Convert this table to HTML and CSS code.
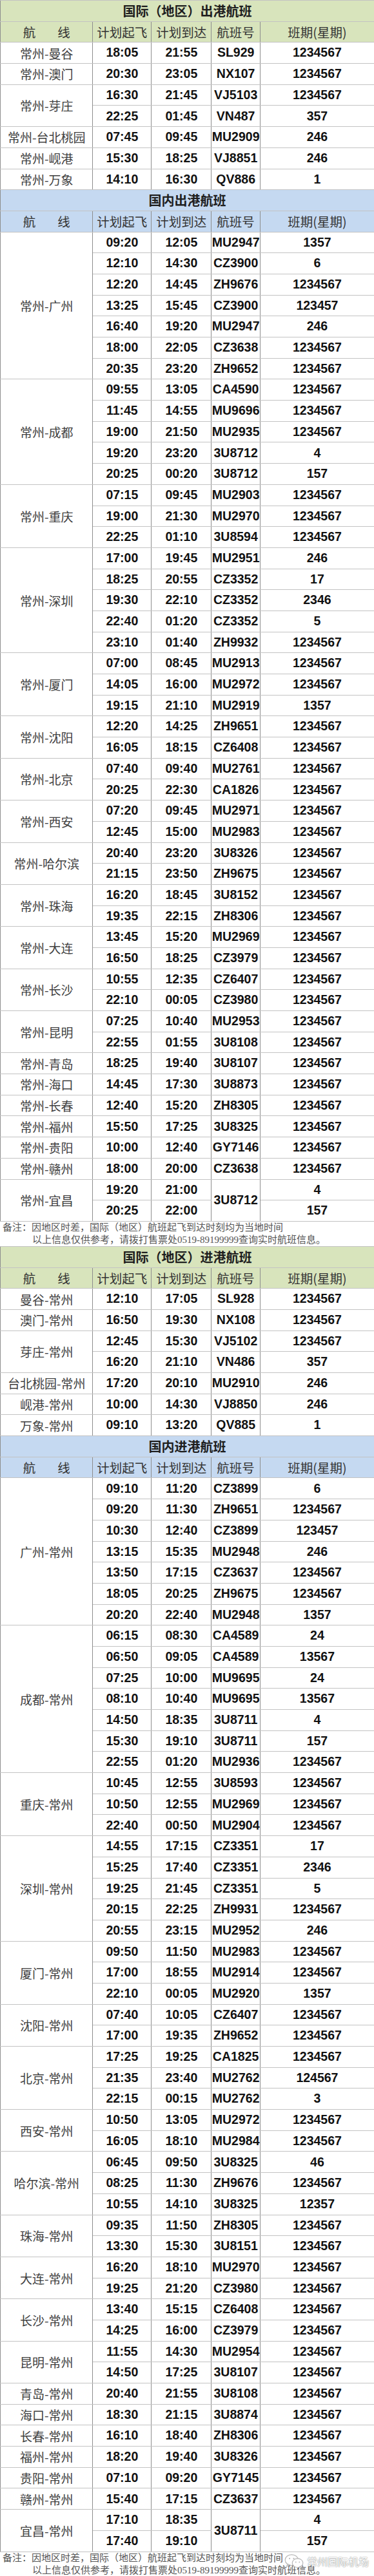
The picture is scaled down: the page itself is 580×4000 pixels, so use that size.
FILE: index.html
```html
<!DOCTYPE html>
<html lang="zh-CN">
<head>
<meta charset="utf-8">
<title>常州国际机场航班时刻表</title>
<link rel="stylesheet" href="styles.css">
</head>
<body>
<div class="page">

<table class="sched">
<colgroup><col class="c1"><col class="c2"><col class="c3"><col class="c4"><col class="c5"></colgroup>
<tr class="title green"><td colspan="5">国际（地区）出港航班</td></tr>
<tr class="head green"><td>航<span class="sp"></span>线</td><td>计划起飞</td><td>计划到达</td><td>航班号</td><td>班期(星期)</td></tr>
<tr><td class="route">常州-曼谷</td><td>18:05</td><td>21:55</td><td>SL929</td><td>1234567</td></tr>
<tr><td class="route">常州-澳门</td><td>20:30</td><td>23:05</td><td>NX107</td><td>1234567</td></tr>
<tr><td class="route" rowspan="2">常州-芽庄</td><td>16:30</td><td>21:45</td><td>VJ5103</td><td>1234567</td></tr>
<tr><td>22:25</td><td>01:45</td><td>VN487</td><td>357</td></tr>
<tr><td class="route">常州-台北桃园</td><td>07:45</td><td>09:45</td><td>MU2909</td><td>246</td></tr>
<tr><td class="route">常州-岘港</td><td>15:30</td><td>18:25</td><td>VJ8851</td><td>246</td></tr>
<tr><td class="route">常州-万象</td><td>14:10</td><td>16:30</td><td>QV886</td><td>1</td></tr>

<tr class="title blue"><td colspan="5">国内出港航班</td></tr>
<tr class="head blue"><td>航<span class="sp"></span>线</td><td>计划起飞</td><td>计划到达</td><td>航班号</td><td>班期(星期)</td></tr>
<tr><td class="route" rowspan="7">常州-广州</td><td>09:20</td><td>12:05</td><td>MU2947</td><td>1357</td></tr>
<tr><td>12:10</td><td>14:30</td><td>CZ3900</td><td>6</td></tr>
<tr><td>12:20</td><td>14:45</td><td>ZH9676</td><td>1234567</td></tr>
<tr><td>13:25</td><td>15:45</td><td>CZ3900</td><td>123457</td></tr>
<tr><td>16:40</td><td>19:20</td><td>MU2947</td><td>246</td></tr>
<tr><td>18:00</td><td>22:05</td><td>CZ3638</td><td>1234567</td></tr>
<tr><td>20:35</td><td>23:20</td><td>ZH9652</td><td>1234567</td></tr>
<tr><td class="route" rowspan="5">常州-成都</td><td>09:55</td><td>13:05</td><td>CA4590</td><td>1234567</td></tr>
<tr><td>11:45</td><td>14:55</td><td>MU9696</td><td>1234567</td></tr>
<tr><td>19:00</td><td>21:50</td><td>MU2935</td><td>1234567</td></tr>
<tr><td>19:20</td><td>23:20</td><td>3U8712</td><td>4</td></tr>
<tr><td>20:25</td><td>00:20</td><td>3U8712</td><td>157</td></tr>
<tr><td class="route" rowspan="3">常州-重庆</td><td>07:15</td><td>09:45</td><td>MU2903</td><td>1234567</td></tr>
<tr><td>19:00</td><td>21:30</td><td>MU2970</td><td>1234567</td></tr>
<tr><td>22:25</td><td>01:10</td><td>3U8594</td><td>1234567</td></tr>
<tr><td class="route" rowspan="5">常州-深圳</td><td>17:00</td><td>19:45</td><td>MU2951</td><td>246</td></tr>
<tr><td>18:25</td><td>20:55</td><td>CZ3352</td><td>17</td></tr>
<tr><td>19:30</td><td>22:10</td><td>CZ3352</td><td>2346</td></tr>
<tr><td>22:40</td><td>01:20</td><td>CZ3352</td><td>5</td></tr>
<tr><td>23:10</td><td>01:40</td><td>ZH9932</td><td>1234567</td></tr>
<tr><td class="route" rowspan="3">常州-厦门</td><td>07:00</td><td>08:45</td><td>MU2913</td><td>1234567</td></tr>
<tr><td>14:05</td><td>16:00</td><td>MU2972</td><td>1234567</td></tr>
<tr><td>19:15</td><td>21:10</td><td>MU2919</td><td>1357</td></tr>
<tr><td class="route" rowspan="2">常州-沈阳</td><td>12:20</td><td>14:25</td><td>ZH9651</td><td>1234567</td></tr>
<tr><td>16:05</td><td>18:15</td><td>CZ6408</td><td>1234567</td></tr>
<tr><td class="route" rowspan="2">常州-北京</td><td>07:40</td><td>09:40</td><td>MU2761</td><td>1234567</td></tr>
<tr><td>20:25</td><td>22:30</td><td>CA1826</td><td>1234567</td></tr>
<tr><td class="route" rowspan="2">常州-西安</td><td>07:20</td><td>09:45</td><td>MU2971</td><td>1234567</td></tr>
<tr><td>12:45</td><td>15:00</td><td>MU2983</td><td>1234567</td></tr>
<tr><td class="route" rowspan="2">常州-哈尔滨</td><td>20:40</td><td>23:20</td><td>3U8326</td><td>1234567</td></tr>
<tr><td>21:15</td><td>23:50</td><td>ZH9675</td><td>1234567</td></tr>
<tr><td class="route" rowspan="2">常州-珠海</td><td>16:20</td><td>18:45</td><td>3U8152</td><td>1234567</td></tr>
<tr><td>19:35</td><td>22:15</td><td>ZH8306</td><td>1234567</td></tr>
<tr><td class="route" rowspan="2">常州-大连</td><td>13:45</td><td>15:20</td><td>MU2969</td><td>1234567</td></tr>
<tr><td>16:50</td><td>18:25</td><td>CZ3979</td><td>1234567</td></tr>
<tr><td class="route" rowspan="2">常州-长沙</td><td>10:55</td><td>12:35</td><td>CZ6407</td><td>1234567</td></tr>
<tr><td>22:10</td><td>00:05</td><td>CZ3980</td><td>1234567</td></tr>
<tr><td class="route" rowspan="2">常州-昆明</td><td>07:25</td><td>10:40</td><td>MU2953</td><td>1234567</td></tr>
<tr><td>22:55</td><td>01:55</td><td>3U8108</td><td>1234567</td></tr>
<tr><td class="route">常州-青岛</td><td>18:25</td><td>19:40</td><td>3U8107</td><td>1234567</td></tr>
<tr><td class="route">常州-海口</td><td>14:45</td><td>17:30</td><td>3U8873</td><td>1234567</td></tr>
<tr><td class="route">常州-长春</td><td>12:40</td><td>15:20</td><td>ZH8305</td><td>1234567</td></tr>
<tr><td class="route">常州-福州</td><td>15:50</td><td>17:25</td><td>3U8325</td><td>1234567</td></tr>
<tr><td class="route">常州-贵阳</td><td>10:00</td><td>12:40</td><td>GY7146</td><td>1234567</td></tr>
<tr><td class="route">常州-赣州</td><td>18:00</td><td>20:00</td><td>CZ3638</td><td>1234567</td></tr>
<tr><td class="route" rowspan="2">常州-宜昌</td><td>19:20</td><td>21:00</td><td rowspan="2">3U8712</td><td>4</td></tr>
<tr><td>20:25</td><td>22:00</td><td>157</td></tr>
</table>

<div class="note">
<p>备注：因地区时差，国际（地区）航班起飞到达时刻均为当地时间</p>
<p class="indent">以上信息仅供参考，请拨打售票处0519-89199999查询实时航班信息。</p>
</div>

<table class="sched">
<colgroup><col class="c1"><col class="c2"><col class="c3"><col class="c4"><col class="c5"></colgroup>
<tr class="title green"><td colspan="5">国际（地区）进港航班</td></tr>
<tr class="head green"><td>航<span class="sp"></span>线</td><td>计划起飞</td><td>计划到达</td><td>航班号</td><td>班期(星期)</td></tr>
<tr><td class="route">曼谷-常州</td><td>12:10</td><td>17:05</td><td>SL928</td><td>1234567</td></tr>
<tr><td class="route">澳门-常州</td><td>16:50</td><td>19:30</td><td>NX108</td><td>1234567</td></tr>
<tr><td class="route" rowspan="2">芽庄-常州</td><td>12:45</td><td>15:30</td><td>VJ5102</td><td>1234567</td></tr>
<tr><td>16:20</td><td>21:10</td><td>VN486</td><td>357</td></tr>
<tr><td class="route">台北桃园-常州</td><td>17:20</td><td>20:10</td><td>MU2910</td><td>246</td></tr>
<tr><td class="route">岘港-常州</td><td>10:00</td><td>14:30</td><td>VJ8850</td><td>246</td></tr>
<tr><td class="route">万象-常州</td><td>09:10</td><td>13:20</td><td>QV885</td><td>1</td></tr>

<tr class="title blue"><td colspan="5">国内进港航班</td></tr>
<tr class="head blue"><td>航<span class="sp"></span>线</td><td>计划起飞</td><td>计划到达</td><td>航班号</td><td>班期(星期)</td></tr>
<tr><td class="route" rowspan="7">广州-常州</td><td>09:10</td><td>11:20</td><td>CZ3899</td><td>6</td></tr>
<tr><td>09:20</td><td>11:30</td><td>ZH9651</td><td>1234567</td></tr>
<tr><td>10:30</td><td>12:40</td><td>CZ3899</td><td>123457</td></tr>
<tr><td>13:15</td><td>15:35</td><td>MU2948</td><td>246</td></tr>
<tr><td>13:50</td><td>17:15</td><td>CZ3637</td><td>1234567</td></tr>
<tr><td>18:05</td><td>20:25</td><td>ZH9675</td><td>1234567</td></tr>
<tr><td>20:20</td><td>22:40</td><td>MU2948</td><td>1357</td></tr>
<tr><td class="route" rowspan="7">成都-常州</td><td>06:15</td><td>08:30</td><td>CA4589</td><td>24</td></tr>
<tr><td>06:50</td><td>09:05</td><td>CA4589</td><td>13567</td></tr>
<tr><td>07:25</td><td>10:00</td><td>MU9695</td><td>24</td></tr>
<tr><td>08:10</td><td>10:40</td><td>MU9695</td><td>13567</td></tr>
<tr><td>14:50</td><td>18:35</td><td>3U8711</td><td>4</td></tr>
<tr><td>15:30</td><td>19:10</td><td>3U8711</td><td>157</td></tr>
<tr><td>22:55</td><td>01:20</td><td>MU2936</td><td>1234567</td></tr>
<tr><td class="route" rowspan="3">重庆-常州</td><td>10:45</td><td>12:55</td><td>3U8593</td><td>1234567</td></tr>
<tr><td>10:50</td><td>12:55</td><td>MU2969</td><td>1234567</td></tr>
<tr><td>22:40</td><td>00:50</td><td>MU2904</td><td>1234567</td></tr>
<tr><td class="route" rowspan="5">深圳-常州</td><td>14:55</td><td>17:15</td><td>CZ3351</td><td>17</td></tr>
<tr><td>15:25</td><td>17:40</td><td>CZ3351</td><td>2346</td></tr>
<tr><td>19:25</td><td>21:45</td><td>CZ3351</td><td>5</td></tr>
<tr><td>20:15</td><td>22:25</td><td>ZH9931</td><td>1234567</td></tr>
<tr><td>20:55</td><td>23:15</td><td>MU2952</td><td>246</td></tr>
<tr><td class="route" rowspan="3">厦门-常州</td><td>09:50</td><td>11:50</td><td>MU2983</td><td>1234567</td></tr>
<tr><td>17:00</td><td>18:55</td><td>MU2914</td><td>1234567</td></tr>
<tr><td>22:10</td><td>00:05</td><td>MU2920</td><td>1357</td></tr>
<tr><td class="route" rowspan="2">沈阳-常州</td><td>07:40</td><td>10:05</td><td>CZ6407</td><td>1234567</td></tr>
<tr><td>17:00</td><td>19:35</td><td>ZH9652</td><td>1234567</td></tr>
<tr><td class="route" rowspan="3">北京-常州</td><td>17:25</td><td>19:25</td><td>CA1825</td><td>1234567</td></tr>
<tr><td>21:35</td><td>23:40</td><td>MU2762</td><td>124567</td></tr>
<tr><td>22:15</td><td>00:15</td><td>MU2762</td><td>3</td></tr>
<tr><td class="route" rowspan="2">西安-常州</td><td>10:50</td><td>13:05</td><td>MU2972</td><td>1234567</td></tr>
<tr><td>16:05</td><td>18:10</td><td>MU2984</td><td>1234567</td></tr>
<tr><td class="route" rowspan="3">哈尔滨-常州</td><td>06:45</td><td>09:50</td><td>3U8325</td><td>46</td></tr>
<tr><td>08:25</td><td>11:30</td><td>ZH9676</td><td>1234567</td></tr>
<tr><td>10:55</td><td>14:10</td><td>3U8325</td><td>12357</td></tr>
<tr><td class="route" rowspan="2">珠海-常州</td><td>09:35</td><td>11:50</td><td>ZH8305</td><td>1234567</td></tr>
<tr><td>13:30</td><td>15:30</td><td>3U8151</td><td>1234567</td></tr>
<tr><td class="route" rowspan="2">大连-常州</td><td>16:20</td><td>18:10</td><td>MU2970</td><td>1234567</td></tr>
<tr><td>19:25</td><td>21:20</td><td>CZ3980</td><td>1234567</td></tr>
<tr><td class="route" rowspan="2">长沙-常州</td><td>13:40</td><td>15:15</td><td>CZ6408</td><td>1234567</td></tr>
<tr><td>14:25</td><td>16:00</td><td>CZ3979</td><td>1234567</td></tr>
<tr><td class="route" rowspan="2">昆明-常州</td><td>11:55</td><td>14:30</td><td>MU2954</td><td>1234567</td></tr>
<tr><td>14:50</td><td>17:25</td><td>3U8107</td><td>1234567</td></tr>
<tr><td class="route">青岛-常州</td><td>20:40</td><td>21:55</td><td>3U8108</td><td>1234567</td></tr>
<tr><td class="route">海口-常州</td><td>18:30</td><td>21:15</td><td>3U8874</td><td>1234567</td></tr>
<tr><td class="route">长春-常州</td><td>16:10</td><td>18:40</td><td>ZH8306</td><td>1234567</td></tr>
<tr><td class="route">福州-常州</td><td>18:20</td><td>19:40</td><td>3U8326</td><td>1234567</td></tr>
<tr><td class="route">贵阳-常州</td><td>07:10</td><td>09:20</td><td>GY7145</td><td>1234567</td></tr>
<tr><td class="route">赣州-常州</td><td>15:40</td><td>17:15</td><td>CZ3637</td><td>1234567</td></tr>
<tr><td class="route" rowspan="2">宜昌-常州</td><td>17:10</td><td>18:35</td><td rowspan="2">3U8711</td><td>4</td></tr>
<tr><td>17:40</td><td>19:10</td><td>157</td></tr>
</table>

<div class="note last">
<p>备注：因地区时差，国际（地区）航班起飞到达时刻均为当地时间</p>
<p class="indent">以上信息仅供参考，请拨打售票处0519-89199999查询实时航班信息。</p>
<div class="mark">
<svg class="wx" viewBox="0 0 34 26" width="32" height="24" aria-hidden="true">
<ellipse cx="13" cy="11" rx="11" ry="9" fill="#fff" stroke="#b5b5b5" stroke-width="1.2"/>
<path d="M6 18 L4.5 22 L10 19.3 Z" fill="#fff" stroke="#b5b5b5" stroke-width="1.2" stroke-linejoin="round"/>
<ellipse cx="23" cy="16" rx="9" ry="7.5" fill="#fff" stroke="#b5b5b5" stroke-width="1.2"/>
<path d="M28 21.5 L30 25 L25.5 23 Z" fill="#fff" stroke="#b5b5b5" stroke-width="1.2" stroke-linejoin="round"/>
<circle cx="9.5" cy="8.5" r="1.2" fill="#b5b5b5"/>
<circle cx="16.5" cy="8.5" r="1.2" fill="#b5b5b5"/>
<circle cx="20" cy="14.5" r="1" fill="#b5b5b5"/>
<circle cx="26" cy="14.5" r="1" fill="#b5b5b5"/>
</svg>
<span class="mark-text">常州国际机场</span>
</div>
</div>

</div>
</body>
</html>
```
FILE: styles.css
```css
html, body {
  margin: 0;
  padding: 0;
  background: #ffffff;
}

.page {
  width: 580px;
}

.sched {
  width: 100%;
  border-collapse: collapse;
  table-layout: fixed;
}

.c1 { width: 24.74%; }
.c2 { width: 15.69%; }
.c3 { width: 16.07%; }
.c4 { width: 13.02%; }
.c5 { width: 30.48%; }

.sched td {
  box-sizing: border-box;
  height: 32.7px;
  padding: 0;
  text-align: center;
  vertical-align: middle;
  border-top: 1px solid #c3c3c3;
  border-bottom: 1px solid #c3c3c3;
  border-left: 1px solid #8e8e8e;
  border-right: 1px solid #8e8e8e;
  font-family: "Liberation Sans Narrow", "Arial Narrow", "Liberation Sans", Arial, sans-serif;
  font-stretch: condensed;
  font-weight: 700;
  font-size: 19.5px;
  color: #111111;
  line-height: 1;
  white-space: nowrap;
}

.sched td:last-child {
  border-right: none;
}

.sched td.route {
  font-family: "Noto Sans CJK SC", "Noto Sans", sans-serif;
  font-stretch: normal;
  font-weight: 400;
  font-size: 19px;
  color: #404040;
  border-right-color: #8e8e8e;
}

.title td {
  font-family: "Noto Sans CJK SC", "Noto Sans", sans-serif;
  font-stretch: normal;
  font-weight: 700;
  font-size: 20px;
  color: #1e1e1e;
  border-left-color: #8e8e8e;
  border-right: none;
}

.head td {
  font-family: "Noto Sans CJK SC", "Noto Sans", sans-serif;
  font-stretch: normal;
  font-weight: 400;
  font-size: 19.5px;
  color: #333333;
}

.green td {
  background: #d8e4bc;
}

.blue td {
  background: #c5d9f1;
}

.sp {
  display: inline-block;
  width: 34px;
}

.note {
  position: relative;
  height: 38px;
  padding: 0 0 0 4px;
  font-family: "Liberation Serif", "Noto Sans CJK SC", serif;
  font-size: 15px;
  line-height: 19px;
  color: #555555;
  background: #ffffff;
}

.note p {
  margin: 0;
  white-space: nowrap;
}

.note .indent {
  padding-left: 46px;
}

.mark {
  position: absolute;
  left: 440px;
  top: 2px;
  display: flex;
  align-items: center;
  gap: 4px;
}

.wx {
  display: block;
}

.mark-text {
  font-family: "Noto Sans CJK SC", sans-serif;
  font-size: 16px;
  line-height: 20px;
  color: #ffffff;
  text-shadow: 0 0 1px #8a8a8a, 0 0 2px #9a9a9a;
}
```
